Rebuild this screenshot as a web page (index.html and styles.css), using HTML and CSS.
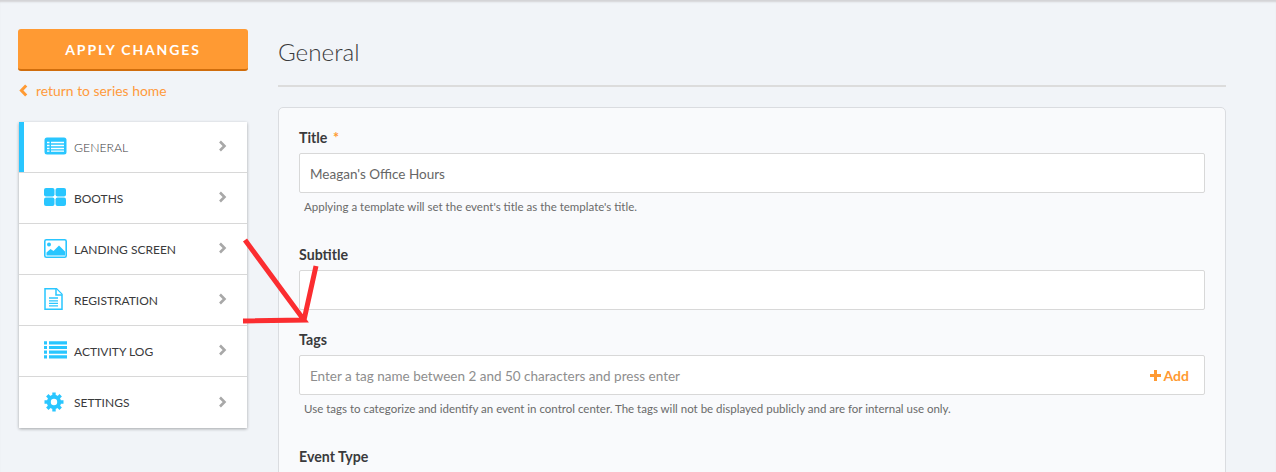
FILE: index.html
```html
<!DOCTYPE html>
<html lang="en">
<head>
<meta charset="utf-8">
<title>General</title>
<link rel="stylesheet" href="styles.css">
</head>
<body>
<div class="page">
  <aside class="sidebar">
    <button class="apply" type="button">APPLY CHANGES</button>
    <a class="back" href="#">
      <svg class="back-icon" viewBox="0 0 9 13"><path d="M7.200 1.500 2.400 6.500 7.200 11.500" fill="none" stroke="#ff9a33" stroke-width="3"/></svg>
      <span>return to series home</span>
    </a>
    <nav class="menu">
      <div class="item active">
        <svg class="ico" viewBox="0 0 23 18"><rect x="0.500" y="0.500" width="22" height="17" rx="2.500" fill="#29c6ff"/><path d="M3 5.500h2.500M7 5.500h13M3 8.500h2.500M7 8.500h13M3 11.500h2.500M7 11.500h13M3 14.200h2.500M7 14.200h13" stroke="#fff" stroke-width="1.300"/></svg>
        <span class="name light">GENERAL</span>
        <svg class="chev" viewBox="0 0 9 12"><path d="M2 1.500 6.500 6 2 10.500" fill="none" stroke="#a8a8a8" stroke-width="2.600"/></svg>
      </div>
      <div class="item">
        <svg class="ico" viewBox="0 0 23 18"><rect x="0" y="0" width="10.500" height="8.500" rx="2" fill="#29c6ff"/><rect x="11.500" y="0" width="10.500" height="8.500" rx="2" fill="#29c6ff"/><rect x="0" y="9.500" width="10.500" height="8.500" rx="2" fill="#29c6ff"/><rect x="11.500" y="9.500" width="10.500" height="8.500" rx="2" fill="#29c6ff"/></svg>
        <span class="name">BOOTHS</span>
        <svg class="chev" viewBox="0 0 9 12"><path d="M2 1.500 6.500 6 2 10.500" fill="none" stroke="#a8a8a8" stroke-width="2.600"/></svg>
      </div>
      <div class="item">
        <svg class="ico tall" viewBox="0 0 23 19"><rect x="0.800" y="0.800" width="21.400" height="17.400" rx="1.500" fill="#fff" stroke="#29c6ff" stroke-width="1.600"/><circle cx="5" cy="5.500" r="2" fill="#29c6ff"/><path d="M2.500 16.500v-3l4-3.500 3 2 5.500-5.500 6 6v4z" fill="#29c6ff"/></svg>
        <span class="name">LANDING SCREEN</span>
        <svg class="chev" viewBox="0 0 9 12"><path d="M2 1.500 6.500 6 2 10.500" fill="none" stroke="#a8a8a8" stroke-width="2.600"/></svg>
      </div>
      <div class="item">
        <svg class="ico doc" viewBox="0 0 19 22"><path d="M1 .8h11.500L18 6.300v14.900H1z" fill="#fff" stroke="#29c6ff" stroke-width="1.500"/><path d="M12 1v6h6" fill="#fff" stroke="#29c6ff" stroke-width="1.500"/><path d="M5 10h9M5 12.800h9M5 15.300h9M5 17.800h9" stroke="#29c6ff" stroke-width="1.300"/></svg>
        <span class="name">REGISTRATION</span>
        <svg class="chev" viewBox="0 0 9 12"><path d="M2 1.500 6.500 6 2 10.500" fill="none" stroke="#a8a8a8" stroke-width="2.600"/></svg>
      </div>
      <div class="item">
        <svg class="ico" viewBox="0 0 23 18"><path d="M0 1.800h3M5 1.800h18M0 6.500h3M5 6.500h18M0 11.200h3M5 11.200h18M0 15.800h3M5 15.800h18" stroke="#29c6ff" stroke-width="3.200"/></svg>
        <span class="name">ACTIVITY LOG</span>
        <svg class="chev" viewBox="0 0 9 12"><path d="M2 1.500 6.500 6 2 10.500" fill="none" stroke="#a8a8a8" stroke-width="2.600"/></svg>
      </div>
      <div class="item">
        <svg class="ico gear" viewBox="0 0 20 20"><circle cx="10" cy="10" r="5.200" fill="none" stroke="#29c6ff" stroke-width="4"/><path d="M10 .5v19M.5 10h19M3.300 3.300l13.400 13.400M16.700 3.300 3.300 16.700" stroke="#29c6ff" stroke-width="3.400" stroke-dasharray="3.600 11.800"/></svg>
        <span class="name">SETTINGS</span>
        <svg class="chev" viewBox="0 0 9 12"><path d="M2 1.500 6.500 6 2 10.500" fill="none" stroke="#a8a8a8" stroke-width="2.600"/></svg>
      </div>
    </nav>
  </aside>
  <main class="main">
    <h1 class="heading">General</h1>
    <section class="card">
      <div class="field with-help">
        <label class="label">Title <span class="req">*</span></label>
        <div class="input value">Meagan's Office Hours</div>
        <p class="help">Applying a template will set the event's title as the template's title.</p>
      </div>
      <div class="field">
        <label class="label">Subtitle</label>
        <div class="input"></div>
      </div>
      <div class="field with-help">
        <label class="label">Tags</label>
        <div class="input placeholder"><span>Enter a tag name between 2 and 50 characters and press enter</span><span class="add"><svg class="plus" viewBox="0 0 11 11"><path d="M5.500 0v11M0 5.500h11" stroke="#ff9a33" stroke-width="3"/></svg>Add</span></div>
        <p class="help">Use tags to categorize and identify an event in control center. The tags will not be displayed publicly and are for internal use only.</p>
      </div>
      <div class="field">
        <label class="label">Event Type</label>
      </div>
    </section>
  </main>
</div>
<svg class="scribble" viewBox="0 0 1276 472" aria-hidden="true"><path d="M245 240 304 320 243 321M316 266 304 320" fill="none" stroke="#fb2d30" stroke-width="5"/></svg>
</body>
</html>
```
FILE: styles.css
```css
* { box-sizing: border-box; }
html, body { margin: 0; height: 472px; overflow: hidden; }
body {
  position: relative;
  background: #f1f4f8;
  font-family: Lato, "Open Sans", sans-serif;
  color: #3a3a3c;
  box-shadow: inset 0 3px 2px -1px #d2d2d5;
}
.page { display: flex; align-items: flex-start; gap: 30px; height: 472px; overflow: hidden; padding: 29px 50px 0 18px; }
.sidebar { width: 230px; flex: none; }
.apply {
  display: block;
  width: 100%;
  height: 42px;
  border: 0;
  border-bottom: 2px solid #d06d0c;
  border-radius: 3px;
  background: #ff9a33;
  color: #fff;
  font: 700 14px/40px Lato, sans-serif;
  letter-spacing: 1.850px;
}
.back {
  display: flex;
  align-items: center;
  gap: 8px;
  height: 20px;
  margin: 9px 0 22px 1px;
  color: #ff9a3c;
  font-size: 13.900px;
  text-decoration: none;
}
.back-icon { width: 9px; height: 13px; }
.menu { width: 228px; margin-left: 1px; background: #fff; box-shadow: 0 1px 3px rgba(0,0,0,.32); }
.item {
  display: flex;
  align-items: center;
  height: 51px;
  padding: 0 20px 2px 25px;
  border-bottom: 1px solid #d8d8d8;
}
.item:last-child { border-bottom: 0; }
.item.active { box-shadow: inset 5px 0 0 #29c6ff; }
.ico { width: 23px; height: 18px; flex: none; margin-right: 7px; }
.ico.tall { height: 19px; }
.ico.doc { width: 19px; height: 22px; margin-right: 11px; }
.ico.gear { width: 20px; height: 20px; margin-right: 10px; }
.name { flex: 1; margin-top: 2px; font-size: 12px; color: #3a3a3c; }
.name.light { font-size: 12.300px; font-weight: 300; }
.chev { width: 9px; height: 12px; flex: none; }
.main { flex: 1; min-width: 0; }
.heading {
  height: 58px;
  margin: 0 0 20px;
  padding-top: 7px;
  border-bottom: 2px solid #dcdcdc;
  font-size: 24.200px;
  line-height: 32px;
  font-weight: 300;
  color: #3a3a3c;
}
.card {
  height: 400px;
  padding: 20px 20px 0;
  border: 1px solid #dadce0;
  border-radius: 5px;
  background: #f9fafc;
}
.field { margin-bottom: 20px; }
.field.with-help { margin-bottom: 31px; }
.label { display: block; height: 20px; margin-bottom: 5px; font-size: 14.200px; line-height: 20px; font-weight: 700; }
.req { color: #ff9a33; margin-left: 2px; }
.input {
  display: flex;
  align-items: center;
  justify-content: space-between;
  height: 40px;
  padding: 1px 15px 0 10px;
  background: #fff;
  border: 1px solid #d8d8d8;
  border-radius: 2px;
  font-size: 13.500px;
  color: #666;
}
.input.placeholder { color: #8e8e8e; }
.add { display: flex; align-items: center; gap: 3px; color: #ff9a33; font-size: 14px; font-weight: 700; }
.plus { width: 11px; height: 11px; }
.help { margin: 7px 0 0 5px; font-size: 11.500px; line-height: 14px; color: #6a6a6a; }
.scribble { position: absolute; left: 0; top: 0; width: 1276px; height: 472px; pointer-events: none; }
```
